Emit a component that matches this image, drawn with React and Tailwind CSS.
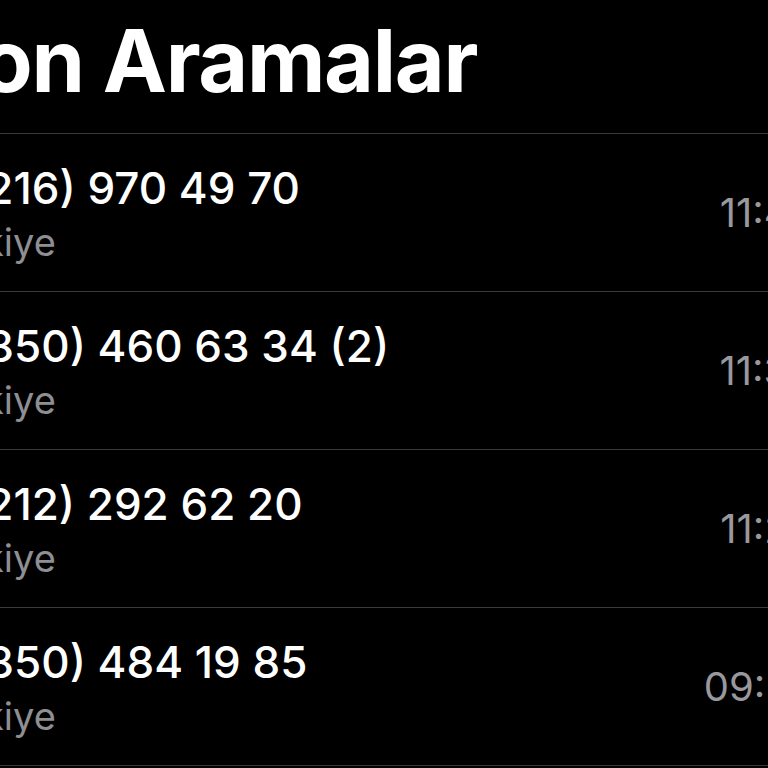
import React from 'react';

const calls = [
  { number: '0 (216) 970 49 70', place: 'Türkiye', time: '11:45' },
  { number: '0 (850) 460 63 34 (2)', place: 'Türkiye', time: '11:34' },
  { number: '0 (212) 292 62 20', place: 'Türkiye', time: '11:20' },
  { number: '0 (850) 484 19 85', place: 'Türkiye', time: '09:52' },
];

const CallRow = ({ call }) => (
  <div className="h-[158px] border-b border-[#3a3a3c] flex items-start justify-between pt-[30px]">
    <div className="flex flex-col">
      <div className="text-[44px] leading-[48px] font-medium text-white whitespace-nowrap">
        {call.number}
      </div>
      <div className="mt-[8px] -ml-[7px] text-[38px] leading-[44px] text-[#8e8e93] whitespace-nowrap">
        {call.place}
      </div>
    </div>
    <div className="mt-[29px] text-[40px] leading-[40px] text-[#98989d] whitespace-nowrap">
      {call.time}
    </div>
  </div>
);

export default function App() {
  return (
    <div
      className="w-[768px] h-[768px] bg-black overflow-hidden"
      style={{ fontFamily: 'Inter, "Noto Sans", sans-serif' }}
    >
      <div className="w-[884px] -ml-[70px]">
        <div className="h-[134px] border-b border-[#3a3a3c] pt-[18px]">
          <h1 className="-ml-[5px] text-[86px] leading-none font-bold tracking-[-0.015em] text-white whitespace-nowrap">
            Son Aramalar
          </h1>
        </div>
        {calls.map((call, i) => (
          <CallRow key={i} call={call} />
        ))}
      </div>
    </div>
  );
}
